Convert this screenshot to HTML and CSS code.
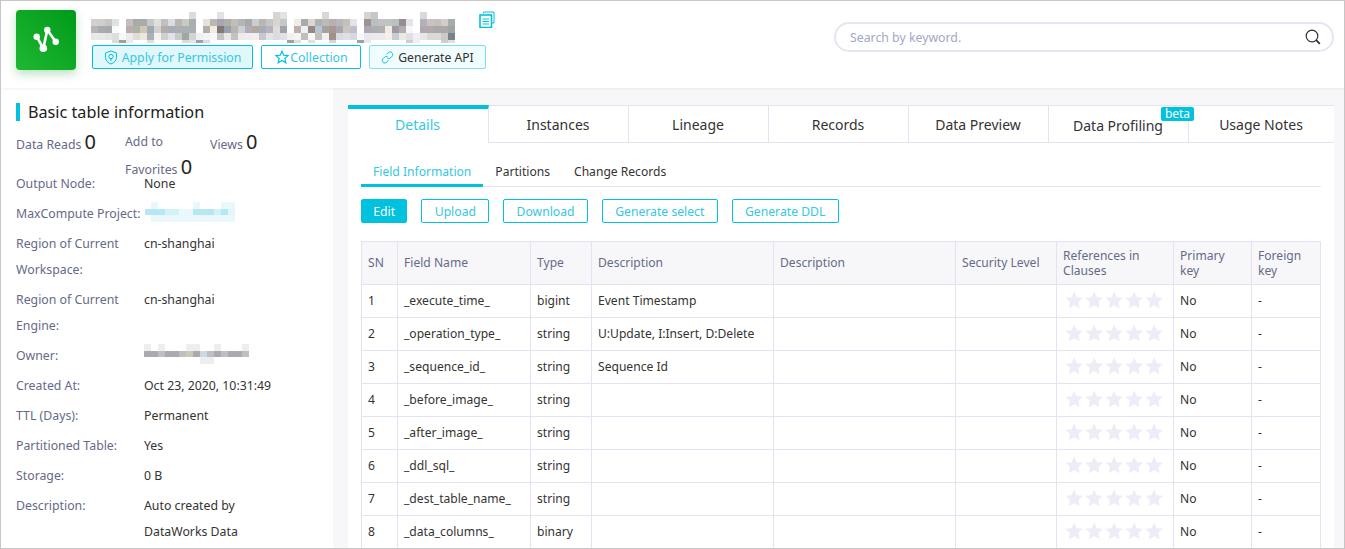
FILE: index.html
```html
<!DOCTYPE html>
<html lang="en">
<head>
    <meta charset="UTF-8">
    <title>Table details</title>
    <link rel="stylesheet" href="styles.css">
</head>
<body>
    <svg class="defs" width="0" height="0">
        <symbol id="stars" viewBox="0 0 98 17">
            <polygon id="star" points="9,0.5 11.6,6 17.6,6.7 13.2,10.8 14.3,16.8 9,13.9 3.7,16.8 4.8,10.8 0.4,6.7 6.4,6"/>
            <use href="#star" x="19.6"/>
            <use href="#star" x="39.2"/>
            <use href="#star" x="58.8"/>
            <use href="#star" x="78.4"/>
        </symbol>
    </svg>

    <div class="window">
        <header class="top">
            <div class="logo">
                <svg width="60" height="60" viewBox="0 0 60 60">
                    <polyline points="20.7,26.7 27.3,38.3 31.3,20 39.7,31.7" fill="none" stroke="#fff" stroke-width="2.6"/>
                    <circle cx="20.7" cy="26.7" r="3.2" fill="#fff"/>
                    <circle cx="31.3" cy="20" r="3.2" fill="#fff"/>
                    <circle cx="39.7" cy="31.7" r="3.2" fill="#fff"/>
                    <circle cx="27.3" cy="38.3" r="3.8" fill="#fff"/>
                </svg>
            </div>
            <div class="title-block">
                <div class="title-row">
                    <!-- table name is pixelated in the source shot -->
                    <svg class="mosaic mosaic-title" width="364" height="32" viewBox="0 0 364 32" shape-rendering="crispEdges">
                        <g class="row-top">
                            <rect x="98" fill="#dcdce0"/><rect x="126" fill="#e4e0e8"/><rect x="182" fill="#d8d4d0"/><rect x="189" fill="#dfe3e6"/><rect x="231" fill="#d8d8d8"/><rect x="273" fill="#d8d4cc"/><rect x="280" fill="#c4c8c8"/><rect x="329" fill="#d8d8e0"/>
                        </g>
                        <g class="row-a">
                            <rect x="0" fill="#d0d0d0"/><rect x="7" fill="#cfcfcf"/><rect x="14" fill="#c8c6c2"/><rect x="21" fill="#dfe1e4"/><rect x="35" fill="#c6bebe"/><rect x="42" fill="#aaaaaa"/><rect x="49" fill="#aaaaaa"/><rect x="56" fill="#c2c8cc"/><rect x="63" fill="#e2dedb"/><rect x="70" fill="#c0c0c4"/><rect x="77" fill="#d9dde2"/><rect x="84" fill="#bab6b2"/><rect x="91" fill="#cbc9c6"/><rect x="98" fill="#a8b0ae"/><rect x="112" fill="#e5e2de"/><rect x="119" fill="#b9b8b2"/><rect x="126" fill="#a9a5b2"/><rect x="133" fill="#b0b0aa"/><rect x="140" fill="#c2bcba"/><rect x="147" fill="#b2b6b6"/><rect x="154" fill="#a9abab"/><rect x="161" fill="#c9ced2"/><rect x="168" fill="#bab6b2"/><rect x="175" fill="#c6c6c6"/><rect x="182" fill="#d8d4d0"/><rect x="189" fill="#c4c8cc"/><rect x="203" fill="#f0ece8"/><rect x="210" fill="#aaaaaa"/><rect x="217" fill="#d8d8d8"/><rect x="224" fill="#b0b4b0"/><rect x="231" fill="#bbbbbb"/><rect x="238" fill="#b8b0ac"/><rect x="245" fill="#b8b8bc"/><rect x="252" fill="#c4c0bc"/><rect x="259" fill="#e2e4e8"/><rect x="273" fill="#9c9494"/><rect x="280" fill="#b8c0c0"/><rect x="287" fill="#c4c0c4"/><rect x="294" fill="#c0c4c4"/><rect x="301" fill="#b8c0c0"/><rect x="308" fill="#988c90"/><rect x="315" fill="#e4e4ec"/><rect x="329" fill="#b8b0b4"/><rect x="336" fill="#c8c4c0"/><rect x="343" fill="#c4c0bc"/><rect x="350" fill="#d4ccc8"/><rect x="357" fill="#a8acac"/>
                        </g>
                        <g class="row-b">
                            <rect x="0" fill="#b8b6b2"/><rect x="7" fill="#a8acae"/><rect x="14" fill="#a6aaae"/><rect x="21" fill="#fafafa"/><rect x="35" fill="#b8aeae"/><rect x="42" fill="#aeb0aa"/><rect x="49" fill="#cfc8b2"/><rect x="56" fill="#a0a8b2"/><rect x="63" fill="#d4d2ce"/><rect x="70" fill="#b2aea8"/><rect x="77" fill="#a8acb8"/><rect x="84" fill="#a8b0b0"/><rect x="91" fill="#a8b0b0"/><rect x="98" fill="#a8b0b0"/><rect x="112" fill="#b2aeaa"/><rect x="119" fill="#f2ece2"/><rect x="126" fill="#807878"/><rect x="133" fill="#95a0ac"/><rect x="140" fill="#b8b4b0"/><rect x="147" fill="#c8d0d8"/><rect x="154" fill="#b4acb8"/><rect x="161" fill="#b0aa9c"/><rect x="168" fill="#a8acb8"/><rect x="175" fill="#b4b4c0"/><rect x="182" fill="#dedcda"/><rect x="189" fill="#9ca4a8"/><rect x="203" fill="#bcb0ae"/><rect x="210" fill="#eaf2f6"/><rect x="217" fill="#988880"/><rect x="224" fill="#b8c4d8"/><rect x="231" fill="#a8a09c"/><rect x="238" fill="#a49898"/><rect x="245" fill="#a8a8ac"/><rect x="252" fill="#cac6c0"/><rect x="259" fill="#c0c0c8"/><rect x="273" fill="#b0a8b0"/><rect x="280" fill="#aab0b0"/><rect x="287" fill="#b0b0b0"/><rect x="294" fill="#f0ecea"/><rect x="301" fill="#9c9ca0"/><rect x="308" fill="#b4acb4"/><rect x="315" fill="#f8f8fc"/><rect x="329" fill="#b0a8b0"/><rect x="336" fill="#b0a8ac"/><rect x="343" fill="#aca8a8"/><rect x="350" fill="#aca8a8"/><rect x="357" fill="#a0a4a4"/>
                        </g>
                        <g class="row-c">
                            <rect x="0" fill="#e8e8e8"/><rect x="7" fill="#e8e8e8"/><rect x="14" fill="#e4e4e2"/><rect x="21" fill="#dcdee2"/><rect x="28" fill="#f8f8f8"/><rect x="35" fill="#ececf0"/><rect x="42" fill="#e0dcd8"/><rect x="49" fill="#ece8e0"/><rect x="56" fill="#a8b0b8"/><rect x="63" fill="#f2f2f2"/><rect x="70" fill="#d0cece"/><rect x="77" fill="#e0e4e8"/><rect x="84" fill="#c8cac8"/><rect x="91" fill="#9ca8a0"/><rect x="98" fill="#d0d4d4"/><rect x="105" fill="#f0f0f0"/><rect x="112" fill="#f4f4f4"/><rect x="119" fill="#f8f8f8"/><rect x="126" fill="#c0c4c8"/><rect x="133" fill="#e8e8e8"/><rect x="140" fill="#c4c0bc"/><rect x="147" fill="#ececec"/><rect x="154" fill="#f0ecf0"/><rect x="161" fill="#f0f0f4"/><rect x="168" fill="#c8c8cc"/><rect x="175" fill="#e4e4e8"/><rect x="182" fill="#dddcdc"/><rect x="189" fill="#e0e0e6"/><rect x="196" fill="#f0f0f0"/><rect x="203" fill="#f4f4f4"/><rect x="210" fill="#c0c0b8"/><rect x="217" fill="#f8f8f8"/><rect x="224" fill="#c4c0bc"/><rect x="231" fill="#f0f0f0"/><rect x="238" fill="#a09088"/><rect x="245" fill="#d8dce0"/><rect x="252" fill="#e0e0e4"/><rect x="259" fill="#d8d8dc"/><rect x="266" fill="#f8f8f8"/><rect x="273" fill="#e8e8f0"/><rect x="280" fill="#ece8ec"/><rect x="287" fill="#ece8ec"/><rect x="294" fill="#f4f0ea"/><rect x="301" fill="#c8ccd4"/><rect x="308" fill="#ece8e4"/><rect x="315" fill="#e0e0e4"/><rect x="322" fill="#f0f0f4"/><rect x="329" fill="#e8e8ec"/><rect x="336" fill="#dcd8d4"/><rect x="343" fill="#dcdad8"/><rect x="350" fill="#ccc8c4"/><rect x="357" fill="#788488"/>
                        </g>
                        <g class="row-bottom">
                            <rect x="21" fill="#dedcd4"/><rect x="28" fill="#a0a0a0"/><rect x="35" fill="#e8eaf0"/><rect x="56" fill="#e0e0d8"/><rect x="91" fill="#dcdcd4"/><rect x="98" fill="#e4e4e0"/><rect x="105" fill="#a0a0a0"/><rect x="112" fill="#d8dce4"/><rect x="196" fill="#a0a0a0"/><rect x="203" fill="#e0e0d8"/><rect x="217" fill="#e0e0e0"/><rect x="238" fill="#d8d4d0"/><rect x="266" fill="#a0a0a0"/><rect x="273" fill="#e8e8f0"/><rect x="315" fill="#d0ccc8"/><rect x="322" fill="#f0f0f0"/><rect x="350" fill="#d0ccc8"/><rect x="357" fill="#e0e0e0"/>
                        </g>
                    </svg>
                    <svg class="copy-icon" width="16" height="17" viewBox="0 0 16 17" fill="none" stroke="#00c1de">
                        <path d="M4.5 2.5 V1 H15 V12 H13"/>
                        <rect x="1" y="4" width="11.5" height="12.5" stroke-width="1.6"/>
                        <path d="M3.5 8 H10 M3.5 10.5 H10 M3.5 13 H10"/>
                    </svg>
                </div>
                <div class="actions">
                    <a class="hbtn hbtn-apply">
                        <svg width="14" height="15" viewBox="0 0 14 15" fill="none" stroke="#00c1de">
                            <path d="M7 1 L12.5 3 V7.5 C12.5 10.5 10 12.8 7 14 C4 12.8 1.5 10.5 1.5 7.5 V3 Z"/>
                            <circle cx="7" cy="6.5" r="2.2"/>
                            <path d="M7 8.7 V11"/>
                        </svg>
                        Apply for Permission
                    </a>
                    <a class="hbtn hbtn-collect">
                        <svg width="14" height="14" viewBox="0 0 18 18" fill="none" stroke="#00c1de" stroke-width="1.6">
                            <polygon points="9,1.5 11.3,6.6 16.8,7.2 12.7,10.9 13.9,16.4 9,13.6 4.1,16.4 5.3,10.9 1.2,7.2 6.7,6.6"/>
                        </svg>Collection
                    </a>
                    <a class="hbtn hbtn-api">
                        <svg width="13" height="13" viewBox="0 0 13 13" fill="none" stroke="#00c1de">
                            <path d="M5.6 3.4 L7.6 1.6 C8.6 .8 10 .8 11 1.7 C12 2.7 12 4.2 11.1 5.2 L9.4 6.9 C8.5 7.7 7.2 7.7 6.3 7"/>
                            <path d="M7.4 9.6 L5.4 11.4 C4.4 12.2 3 12.2 2 11.3 C1 10.3 1 8.8 1.9 7.8 L3.6 6.1 C4.5 5.3 5.8 5.3 6.7 6"/>
                        </svg>
                        Generate API
                    </a>
                </div>
            </div>
            <div class="search">
                <span class="search-hint">Search by keyword.</span>
                <svg width="16" height="16" viewBox="0 0 16 16" fill="none" stroke="#2c3040" stroke-width="1.2">
                    <circle cx="7" cy="7" r="5.8"/>
                    <path d="M11.2 11.2 L14.8 14.8" stroke-width="1.8"/>
                </svg>
            </div>
        </header>

        <div class="content">
            <aside class="side">
                <h2 class="side-title">Basic table information</h2>
                <div class="stats">
                    <div class="stat stat-reads">Data Reads <b>0</b></div>
                    <div class="stat stat-favs">Add to Favorites <b>0</b></div>
                    <div class="stat stat-views">Views <b>0</b></div>
                </div>
                <dl class="info">
                    <div class="info-row"><dt>Output Node:</dt><dd>None</dd></div>
                    <div class="info-row"><dt>MaxCompute Project:</dt><dd>
                        <svg class="mosaic" width="93" height="20" viewBox="0 0 93 20" shape-rendering="crispEdges">
                            <g fill="#eaf8fc"><rect x="7" y="0" width="7" height="7"/><rect x="49" y="0" width="7" height="7"/><rect x="77" y="0" width="14" height="7"/><rect x="7" y="13" width="84" height="7"/></g>
                            <g fill="#b5e8f4"><rect x="1" y="7" width="20" height="6"/><rect x="49" y="7" width="21" height="6"/><rect x="77" y="7" width="7" height="6"/></g>
                            <g fill="#d4f1f8"><rect x="21" y="7" width="14" height="6"/><rect x="70" y="7" width="7" height="6"/></g>
                            <rect x="35" y="7" width="14" height="6" fill="#eaf8fc"/>
                            <rect x="84" y="7" width="7" height="6" fill="#e4f6fb"/>
                        </svg>
                    </dd></div>
                    <div class="info-row"><dt>Region of Current Workspace:</dt><dd>cn-shanghai</dd></div>
                    <div class="info-row"><dt>Region of Current Engine:</dt><dd>cn-shanghai</dd></div>
                    <div class="info-row"><dt>Owner:</dt><dd>
                        <svg class="mosaic" width="105" height="20" viewBox="0 0 105 20" shape-rendering="crispEdges">
                            <g fill="#eceef0"><rect x="0" y="0" width="7" height="7"/><rect x="14" y="0" width="7" height="7"/><rect x="42" y="0" width="14" height="7"/><rect x="70" y="0" width="7" height="7"/><rect x="98" y="0" width="7" height="7"/><rect x="56" y="13" width="14" height="7"/></g>
                            <g fill="#aaaab0"><rect x="0" y="7" width="14" height="6"/><rect x="21" y="7" width="14" height="6"/><rect x="49" y="7" width="7" height="6"/><rect x="70" y="7" width="7" height="6"/><rect x="84" y="7" width="14" height="6"/></g>
                            <g fill="#c1bec2"><rect x="14" y="7" width="7" height="6"/><rect x="35" y="7" width="7" height="6"/><rect x="63" y="7" width="7" height="6"/><rect x="77" y="7" width="7" height="6"/><rect x="98" y="7" width="7" height="6"/></g>
                            <rect x="42" y="7" width="7" height="6" fill="#ccc8b8"/>
                            <rect x="56" y="7" width="7" height="6" fill="#d0d8e2"/>
                        </svg>
                    </dd></div>
                    <div class="info-row"><dt>Created At:</dt><dd>Oct 23, 2020, 10:31:49</dd></div>
                    <div class="info-row"><dt>TTL (Days):</dt><dd>Permanent</dd></div>
                    <div class="info-row"><dt>Partitioned Table:</dt><dd>Yes</dd></div>
                    <div class="info-row"><dt>Storage:</dt><dd>0 B</dd></div>
                    <div class="info-row"><dt>Description:</dt><dd class="wrap">Auto created by DataWorks Data</dd></div>
                </dl>
            </aside>

            <main class="panel">
                <nav class="tabs">
                    <a class="tab active">Details</a>
                    <a class="tab">Instances</a>
                    <a class="tab">Lineage</a>
                    <a class="tab">Records</a>
                    <a class="tab">Data Preview</a>
                    <a class="tab tab-beta"><span>Data Profiling</span><em class="beta">beta</em></a>
                    <a class="tab tab-last">Usage Notes</a>
                </nav>
                <div class="panel-body">
                    <nav class="subtabs">
                        <a class="subtab active">Field Information</a>
                        <a class="subtab">Partitions</a>
                        <a class="subtab">Change Records</a>
                    </nav>
                    <div class="toolbar">
                        <a class="btn btn-primary">Edit</a>
                        <a class="btn">Upload</a>
                        <a class="btn">Download</a>
                        <a class="btn">Generate select</a>
                        <a class="btn">Generate DDL</a>
                    </div>
                    <table class="fields">
                        <thead>
                            <tr>
                                <th class="c-sn">SN</th>
                                <th class="c-name">Field Name</th>
                                <th class="c-type">Type</th>
                                <th class="c-desc">Description</th>
                                <th class="c-desc">Description</th>
                                <th class="c-level">Security Level</th>
                                <th class="c-refs">References in Clauses</th>
                                <th class="c-pk">Primary key</th>
                                <th class="c-fk">Foreign key</th>
                            </tr>
                        </thead>
                        <tbody>
                            <tr><td>1</td><td>_execute_time_</td><td>bigint</td><td>Event Timestamp</td><td></td><td></td><td><svg class="stars"><use href="#stars"/></svg></td><td>No</td><td>-</td></tr>
                            <tr><td>2</td><td>_operation_type_</td><td>string</td><td>U:Update, I:Insert, D:Delete</td><td></td><td></td><td><svg class="stars"><use href="#stars"/></svg></td><td>No</td><td>-</td></tr>
                            <tr><td>3</td><td>_sequence_id_</td><td>string</td><td>Sequence Id</td><td></td><td></td><td><svg class="stars"><use href="#stars"/></svg></td><td>No</td><td>-</td></tr>
                            <tr><td>4</td><td>_before_image_</td><td>string</td><td></td><td></td><td></td><td><svg class="stars"><use href="#stars"/></svg></td><td>No</td><td>-</td></tr>
                            <tr><td>5</td><td>_after_image_</td><td>string</td><td></td><td></td><td></td><td><svg class="stars"><use href="#stars"/></svg></td><td>No</td><td>-</td></tr>
                            <tr><td>6</td><td>_ddl_sql_</td><td>string</td><td></td><td></td><td></td><td><svg class="stars"><use href="#stars"/></svg></td><td>No</td><td>-</td></tr>
                            <tr><td>7</td><td>_dest_table_name_</td><td>string</td><td></td><td></td><td></td><td><svg class="stars"><use href="#stars"/></svg></td><td>No</td><td>-</td></tr>
                            <tr><td>8</td><td>_data_columns_</td><td>binary</td><td></td><td></td><td></td><td><svg class="stars"><use href="#stars"/></svg></td><td>No</td><td>-</td></tr>
                        </tbody>
                    </table>
                </div>
            </main>
        </div>
    </div>
</body>
</html>
```

FILE: styles.css
```css
* {
    margin: 0;
    padding: 0;
    box-sizing: border-box;
}

body {
    font-family: "Noto Sans", "Open Sans", sans-serif;
    font-size: 12px;
    color: #333;
    background: #fff;
    overflow: hidden;
}

.defs {
    position: absolute;
}

.window {
    height: 549px;
    border: 1px solid #c6c6c6;
    background: #f7f7fa;
    overflow: hidden;
}

/* Header */
.top {
    height: 87px;
    background: #fff;
    display: flex;
    padding: 9px 10px 0 15px;
    box-shadow: 0 1px 3px rgba(0, 0, 0, 0.06);
    position: relative;
}

.logo {
    width: 60px;
    height: 60px;
    border-radius: 4px;
    background: linear-gradient(45deg, #1fb832, #009a1a);
    box-shadow: 0 4px 10px rgba(20, 160, 50, 0.3);
    flex: none;
}

.title-block {
    margin-left: 15px;
    width: 743px;
    flex: none;
}

.title-row {
    display: flex;
    height: 35px;
    padding-top: 2px;
}

.mosaic {
    display: block;
}

.mosaic-title rect {
    width: 7px;
    height: 7px;
}

.row-a rect { y: 7px; }
.row-b rect { y: 14px; }
.row-c rect { y: 21px; }
.row-bottom rect { y: 28px; height: 3px; }

.copy-icon {
    margin: -1px 0 0 24px;
    flex: none;
}

.actions {
    display: flex;
    gap: 8px;
    margin-left: 1px;
}

.hbtn {
    height: 24px;
    display: flex;
    align-items: center;
    justify-content: center;
    gap: 3px;
    font-size: 12.3px;
    color: #35c6e0;
    border: 1px solid #00c1de;
    border-radius: 2px;
}

.hbtn-apply {
    width: 161px;
    background: #e0f8fc;
    gap: 4px;
}

.hbtn-collect {
    width: 100px;
    padding-left: 1px;
    font-size: 12.4px;
    gap: 1px;
}

.hbtn-api {
    width: 117px;
    font-size: 12.2px;
    color: #333;
    background: #f0fcfe;
    border-color: #80e0ee;
    gap: 4px;
}

.search {
    flex: 1;
    height: 30px;
    margin-top: 12px;
    border: 2px solid #e3e6f3;
    border-radius: 15px;
    display: flex;
    align-items: center;
    justify-content: space-between;
    padding: 0 11px 0 14px;
}

.search-hint {
    font-size: 12.3px;
    color: #a3a7c9;
}

/* Body */
.content {
    display: flex;
    height: 461px;
}

.side {
    width: 332px;
    flex: none;
    background: #fff;
    padding: 15px 10px 0 15px;
    font-size: 12.3px;
    overflow: hidden;
}

.side-title {
    font-size: 16.2px;
    font-weight: 400;
    color: #222;
    line-height: 18px;
    padding-left: 8px;
    border-left: 4px solid #00c1de;
}

.stats {
    display: flex;
    margin-top: 8px;
    color: #666a88;
    font-size: 12.3px;
}

.stat b {
    font-size: 20px;
    font-weight: 400;
    color: #222;
    line-height: 25px;
}

.stat-reads {
    width: 109px;
}

.stat-favs {
    width: 85px;
    line-height: 25px;
}

.info {
    margin-top: -11px;
}

.info-row {
    display: flex;
    line-height: 26px;
    margin-bottom: 4px;
}

.info dt {
    width: 128px;
    flex: none;
    color: #666a88;
}

.info dd {
    flex: 1;
}

.info dd.wrap {
    flex: none;
    width: 110px;
}

.info dd .mosaic {
    margin-top: 1px;
}

/* Main panel */
.panel {
    width: 986px;
    margin: 17px 0 0 15px;
    background: #fff;
    flex: none;
}

.tabs {
    display: flex;
    height: 38px;
    background: #fff;
}

.tab {
    width: 140px;
    display: flex;
    align-items: center;
    justify-content: center;
    font-size: 14px;
    color: #333;
    border-top: 1px solid #e3e3f3;
    border-right: 1px solid #e3e3f3;
    border-bottom: 1px solid #e3e3f3;
    padding-right: 1px;
    position: relative;
}

.tab.active {
    width: 141px;
    color: #36c7e0;
    border-top: 4px solid #00c1de;
    border-bottom: 0;
    padding-bottom: 3px;
}

.tab-last {
    width: 145px;
    border-right: 0;
}

.tab-beta span {
    position: relative;
    top: 1px;
}

.beta {
    position: absolute;
    top: 1px;
    right: -6px;
    width: 33px;
    height: 14px;
    line-height: 14px;
    text-align: center;
    font-style: normal;
    font-size: 12px;
    color: #fff;
    background: #00c1de;
    border-radius: 2px;
}

.panel-body {
    padding: 15px 13px 0;
}

.subtabs {
    display: flex;
    height: 29px;
    border-bottom: 1px solid #e3e3f3;
}

.subtab {
    padding: 0 12px;
    line-height: 27px;
    height: 29px;
    font-size: 12.1px;
    color: #333;
}

.subtab.active {
    color: #36c7e0;
    border-bottom: 3px solid #00c1de;
}

.toolbar {
    display: flex;
    gap: 14px;
    margin-top: 12px;
}

.btn {
    height: 24px;
    line-height: 23px;
    padding: 0 12.3px;
    font-size: 12.2px;
    color: #36c7e0;
    border: 1px solid #00c1de;
    border-radius: 2px;
}

.btn-primary {
    padding: 0 11.3px;
    color: #fff;
    background: #00c1de;
}

.fields {
    width: 959px;
    margin-top: 18px;
    table-layout: fixed;
    border-collapse: collapse;
    font-size: 12.1px;
}

.fields th,
.fields td {
    border: 1px solid #e3e3f3;
    padding: 0 6px 2px;
    text-align: left;
    font-weight: 400;
    line-height: 15px;
}

.fields th {
    height: 43px;
    background: #f7f7fa;
    color: #666a88;
}

.fields th.c-refs,
.fields th.c-pk,
.fields th.c-fk {
    padding-bottom: 0;
}

.fields td {
    height: 33px;
}

.c-sn { width: 36px; }
.c-name { width: 133px; }
.c-type { width: 61px; }
.c-desc { width: 182px; }
.c-level { width: 101px; }
.c-refs { width: 117px; }
.c-pk { width: 78px; }
.c-fk { width: 69px; }

.stars {
    display: block;
    width: 100px;
    height: 17.4px;
    margin: 0 0 0 2px;
    fill: #ecedf7;
}
```
